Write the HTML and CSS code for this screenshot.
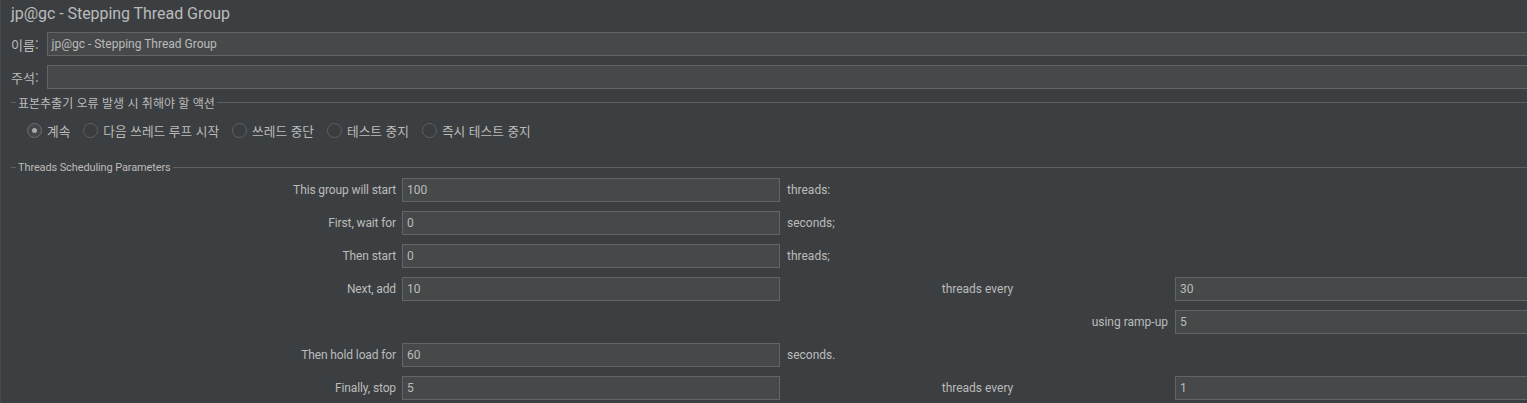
FILE: index.html
```html
<!DOCTYPE html>
<html lang="ko">
<head>
<meta charset="utf-8">
<title>jp@gc - Stepping Thread Group</title>
<link rel="stylesheet" href="styles.css">
</head>
<body>
<div class="panel">
  <div class="title">jp@gc - Stepping Thread Group</div>

  <div class="field-row name-row">
    <span class="field-label">이름:</span>
    <div class="text-input">jp@gc - Stepping Thread Group</div>
  </div>
  <div class="field-row comment-row">
    <span class="field-label">주석:</span>
    <div class="text-input"></div>
  </div>

  <div class="group-header action-header">
    <span class="dash"></span>
    <span class="group-title">표본추출기 오류 발생 시 취해야 할 액션</span>
    <span class="rule"></span>
  </div>
  <div class="radio-row">
    <label class="radio"><span class="radio-dot checked"></span><span>계속</span></label>
    <label class="radio"><span class="radio-dot"></span><span>다음 쓰레드 루프 시작</span></label>
    <label class="radio"><span class="radio-dot"></span><span>쓰레드 중단</span></label>
    <label class="radio"><span class="radio-dot"></span><span>테스트 중지</span></label>
    <label class="radio"><span class="radio-dot"></span><span>즉시 테스트 중지</span></label>
  </div>

  <div class="group-header params-header">
    <span class="dash"></span>
    <span class="group-title">Threads Scheduling Parameters</span>
    <span class="rule"></span>
  </div>

  <div class="params">
    <span class="p-label">This group will start</span>
    <div class="text-input">100</div>
    <span class="p-unit">threads:</span>
    <span class="p-empty"></span>

    <span class="p-label">First, wait for</span>
    <div class="text-input">0</div>
    <span class="p-unit">seconds;</span>
    <span class="p-empty"></span>

    <span class="p-label">Then start</span>
    <div class="text-input">0</div>
    <span class="p-unit">threads;</span>
    <span class="p-empty"></span>

    <span class="p-label">Next, add</span>
    <div class="text-input">10</div>
    <span class="p-unit center">threads every</span>
    <div class="text-input wide">30</div>

    <span class="p-empty"></span>
    <span class="p-empty"></span>
    <span class="p-unit right">using ramp-up</span>
    <div class="text-input wide">5</div>

    <span class="p-label">Then hold load for</span>
    <div class="text-input">60</div>
    <span class="p-unit">seconds.</span>
    <span class="p-empty"></span>

    <span class="p-label">Finally, stop</span>
    <div class="text-input">5</div>
    <span class="p-unit center">threads every</span>
    <div class="text-input wide">1</div>
  </div>
</div>
</body>
</html>
```

FILE: styles.css
```css
html, body {
  margin: 0;
  padding: 0;
  background: #3c3f41;
  overflow: hidden;
}

body {
  width: 1527px;
  height: 403px;
  font-family: Roboto, "Noto Sans CJK KR", sans-serif;
  font-size: 12px;
  color: #bbbbbb;
}

.panel {
  width: 1560px;
  height: 403px;
  border-left: 1px solid #45484a;
  box-sizing: border-box;
}

.title {
  height: 28px;
  line-height: 28px;
  padding-left: 10px;
  font-size: 16px;
  letter-spacing: -0.05px;
  color: #bbbbbb;
}

.field-row {
  display: flex;
  align-items: center;
  height: 24px;
  padding-left: 10px;
  gap: 8px;
}

.name-row { margin-top: 4px; }
.comment-row { margin-top: 9px; }

.field-label {
  font-family: "Noto Sans CJK KR", sans-serif;
  font-size: 13px;
}

.text-input {
  box-sizing: border-box;
  height: 24px;
  line-height: 22px;
  border: 1px solid #646464;
  background: #45494a;
  padding-left: 4px;
  color: #bbbbbb;
  white-space: nowrap;
}

.field-row .text-input {
  flex: 1;
}

.group-header {
  display: flex;
  align-items: center;
  height: 16px;
  padding-left: 10px;
}

.action-header { margin-top: 5px; }
.params-header { margin-top: 19px; }

.dash {
  width: 5px;
  height: 1px;
  background: #5e6163;
  margin-right: 2px;
}

.rule {
  flex: 1;
  height: 1px;
  background: #5e6163;
  margin-left: 2px;
}

.action-header .group-title {
  font-family: "Noto Sans CJK KR", sans-serif;
  font-size: 12px;
}

.params-header .group-title {
  font-size: 11px;
  letter-spacing: -0.12px;
}

.radio-row {
  display: flex;
  align-items: center;
  height: 20px;
  margin-top: 10px;
  padding-left: 26px;
  font-family: "Noto Sans CJK KR", sans-serif;
  font-size: 12.7px;
}

.radio {
  display: flex;
  align-items: center;
  margin-right: 13px;
}

.radio-dot {
  box-sizing: border-box;
  width: 15px;
  height: 15px;
  border-radius: 50%;
  border: 1px solid #5e6163;
  background: #3a3d3f;
  margin-right: 5px;
  display: flex;
  align-items: center;
  justify-content: center;
}

.radio-dot.checked {
  border-color: #6b6e70;
  background: #44474a;
}

.radio-dot.checked::after {
  content: "";
  width: 5px;
  height: 5px;
  border-radius: 50%;
  background: #a8a8a8;
}

.params {
  display: grid;
  grid-template-columns: 402px 378px 395px 400px;
  grid-auto-rows: 24px;
  row-gap: 9px;
  margin-top: 3px;
  margin-left: -1px;
}

.p-label {
  text-align: right;
  padding-right: 6px;
  line-height: 24px;
  letter-spacing: -0.12px;
  white-space: nowrap;
}

.p-unit {
  line-height: 24px;
  padding-left: 7px;
  white-space: nowrap;
}

.p-unit.center {
  text-align: center;
  padding-left: 0;
}

.p-unit.right {
  text-align: right;
  padding-left: 0;
  padding-right: 7px;
}
```
